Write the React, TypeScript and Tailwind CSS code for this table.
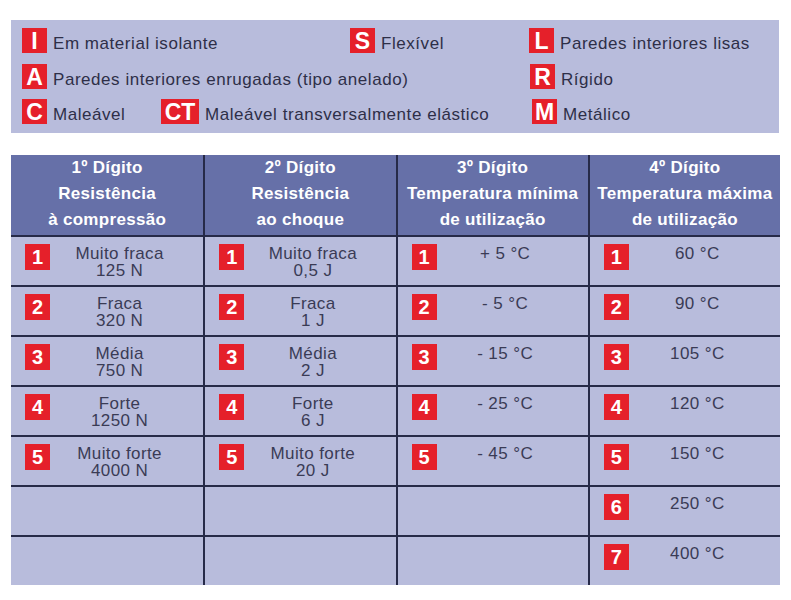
import React from "react";

type Cell = { n: number; lines: string[] } | null;

const COL1: Cell[] = [
  { n: 1, lines: ["Muito fraca", "125 N"] },
  { n: 2, lines: ["Fraca", "320 N"] },
  { n: 3, lines: ["Média", "750 N"] },
  { n: 4, lines: ["Forte", "1250 N"] },
  { n: 5, lines: ["Muito forte", "4000 N"] },
  null,
  null,
];

const COL2: Cell[] = [
  { n: 1, lines: ["Muito fraca", "0,5 J"] },
  { n: 2, lines: ["Fraca", "1 J"] },
  { n: 3, lines: ["Média", "2 J"] },
  { n: 4, lines: ["Forte", "6 J"] },
  { n: 5, lines: ["Muito forte", "20 J"] },
  null,
  null,
];

const COL3: Cell[] = [
  { n: 1, lines: ["+ 5 °C"] },
  { n: 2, lines: ["- 5 °C"] },
  { n: 3, lines: ["- 15 °C"] },
  { n: 4, lines: ["- 25 °C"] },
  { n: 5, lines: ["- 45 °C"] },
  null,
  null,
];

const COL4: Cell[] = [
  { n: 1, lines: ["60 °C"] },
  { n: 2, lines: ["90 °C"] },
  { n: 3, lines: ["105 °C"] },
  { n: 4, lines: ["120 °C"] },
  { n: 5, lines: ["150 °C"] },
  { n: 6, lines: ["250 °C"] },
  { n: 7, lines: ["400 °C"] },
];

const HEADERS = [
  ["1º Dígito", "Resistência", "à compressão"],
  ["2º Dígito", "Resistência", "ao choque"],
  ["3º Dígito", "Temperatura mínima", "de utilização"],
  ["4º Dígito", "Temperatura máxima", "de utilização"],
];

function Badge({ children, wide }: { children: React.ReactNode; wide?: boolean }) {
  return (
    <span
      className={`${wide ? "w-[38px]" : "w-[25px]"} h-[25px] shrink-0 bg-[#e5202a] text-white font-bold text-[23px] leading-[26px] text-center`}
    >
      {children}
    </span>
  );
}

function LegendItem({ code, label, className = "" }: { code: string; label: string; className?: string }) {
  return (
    <div className={`flex items-start gap-[6px] ${className}`}>
      <Badge wide={code.length > 1}>{code}</Badge>
      <span className="text-[17px] tracking-[0.55px] leading-[25px] mt-[3px] text-[#2e2f48] whitespace-nowrap">{label}</span>
    </div>
  );
}

function BodyCell({ cell, first }: { cell: Cell; first: boolean }) {
  return (
    <div className={`h-[50px] border-t-2 border-[#262a48] ${first ? "" : "border-l-2"} flex items-start pl-[14px] pt-[7px] pr-[14px]`}>
      {cell && (
        <>
          <span className="w-[25px] h-[26px] shrink-0 bg-[#e5202a] text-white font-bold text-[20px] leading-[26px] text-center">
            {cell.n}
          </span>
          <div className="flex-1 text-center text-[17px] tracking-[0.4px] leading-[17px] pt-[1px] text-[#3a3b55]">
            {cell.lines.map((l) => (
              <div key={l}>{l}</div>
            ))}
          </div>
        </>
      )}
    </div>
  );
}

export default function App() {
  const cols = [COL1, COL2, COL3, COL4];
  return (
    <div className="w-[791px] h-[600px] bg-white pt-[20px] pl-[11px]" style={{ fontFamily: '"Liberation Sans", Arial, sans-serif' }}>
      {/* legend */}
      <div className="w-[768px] h-[113px] bg-[#b8bcdc] pl-[11px] pt-[8px]">
        <div className="h-[35.5px] flex">
          <LegendItem code="I" label="Em material isolante" className="w-[328px]" />
          <LegendItem code="S" label="Flexível" className="w-[179px]" />
          <LegendItem code="L" label="Paredes interiores lisas" />
        </div>
        <div className="h-[35.5px] flex">
          <LegendItem code="A" label="Paredes interiores enrugadas (tipo anelado)" className="w-[508px]" />
          <LegendItem code="R" label="Rígido" />
        </div>
        <div className="h-[35.5px] flex">
          <LegendItem code="C" label="Maleável" className="w-[139px]" />
          <LegendItem code="CT" label="Maleável transversalmente elástico" className="w-[371px]" />
          <LegendItem code="M" label="Metálico" />
        </div>
      </div>

      {/* table */}
      <div className="w-[769px] mt-[22px] bg-[#b8bcdc] grid grid-cols-4">
        {HEADERS.map((h, i) => (
          <div
            key={i}
            className={`h-[80px] bg-[#6670a8] text-white font-bold text-[17px] tracking-[0.3px] leading-[26px] text-center ${i ? "border-l-2 border-[#262a48]" : ""}`}
          >
            {h.map((l) => (
              <div key={l}>{l}</div>
            ))}
          </div>
        ))}
        {Array.from({ length: 7 }).map((_, r) =>
          cols.map((c, ci) => <BodyCell key={`${r}-${ci}`} cell={c[r]} first={ci === 0} />)
        )}
      </div>
    </div>
  );
}
